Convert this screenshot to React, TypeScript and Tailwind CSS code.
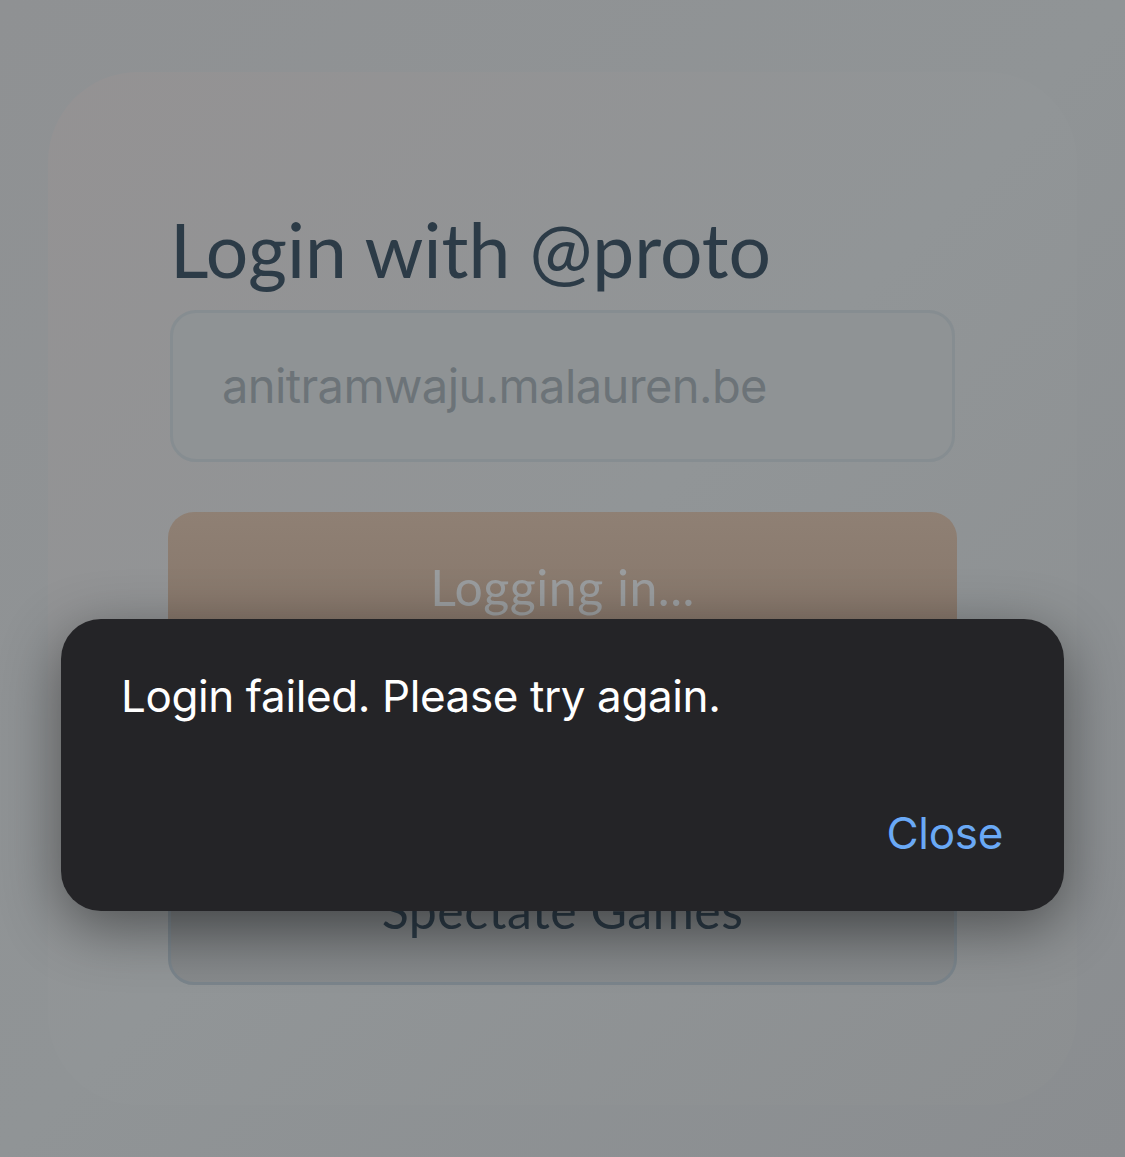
import React from "react";

export default function App() {
  return (
    <div className="relative w-[1125px] h-[1157px] overflow-hidden bg-[#8b8e91]" style={{ fontFamily: "Inter, 'Noto Sans', sans-serif" }}>
      <div className="absolute inset-0 bg-gradient-to-br from-[#8f9193] via-[#909496] to-[#8a8d90]" />
      <div className="relative pt-[72px] pl-[48px]">
        <div className="w-[1029px] h-[1033px] rounded-[90px] bg-gradient-to-br from-[#949293] via-[#919597] to-[#8c8f91] pl-[122px] pt-[132px]">
          <h1 className="text-[#2c3b47] text-[75px] leading-[1.2]" style={{ fontFamily: "Lato, 'Noto Sans', sans-serif" }}>
            Login with @proto
          </h1>
          <div className="mt-[16px] w-[785px] h-[152px] rounded-[26px] border-[3px] border-[#868d91] bg-[#8f9395] flex items-center pl-[49px]">
            <span className="text-[#6c7378] text-[47px] tracking-[-0.6px]">anitramwaju.malauren.be</span>
          </div>
          <div className="mt-[50px] -ml-[2px] w-[789px] h-[150px] rounded-[26px] bg-gradient-to-b from-[#8f8074] to-[#847468] flex items-center justify-center">
            <span className="text-[#9a9d9f] text-[50px] tracking-[0.5px]" style={{ fontFamily: "Lato, 'Noto Sans', sans-serif" }}>Logging in...</span>
          </div>
          <div className="mt-[173px] -ml-[2px] w-[789px] h-[150px] rounded-[26px] border-[3px] border-[#7a848b] bg-gradient-to-b from-[#6c7073] to-[#878a8c] flex items-center justify-center">
            <span className="text-[#2c3b47] text-[50px] tracking-[0.5px]" style={{ fontFamily: "Lato, 'Noto Sans', sans-serif" }}>Spectate Games</span>
          </div>
        </div>
      </div>
      <div className="absolute left-[61px] top-[619px] w-[1003px] h-[292px] rounded-[40px] bg-[#242427] shadow-[0_16px_60px_rgba(0,0,0,0.45)] flex flex-col justify-between pl-[60px] pr-[61px] pt-[49px] pb-[50px]">
        <p className="text-white text-[44px] leading-[56px] tracking-[-0.4px]">Login failed. Please try again.</p>
        <div className="flex justify-end">
          <span className="text-[#6aa9f6] text-[44px] leading-[56px] tracking-[-0.3px]">Close</span>
        </div>
      </div>
    </div>
  );
}
